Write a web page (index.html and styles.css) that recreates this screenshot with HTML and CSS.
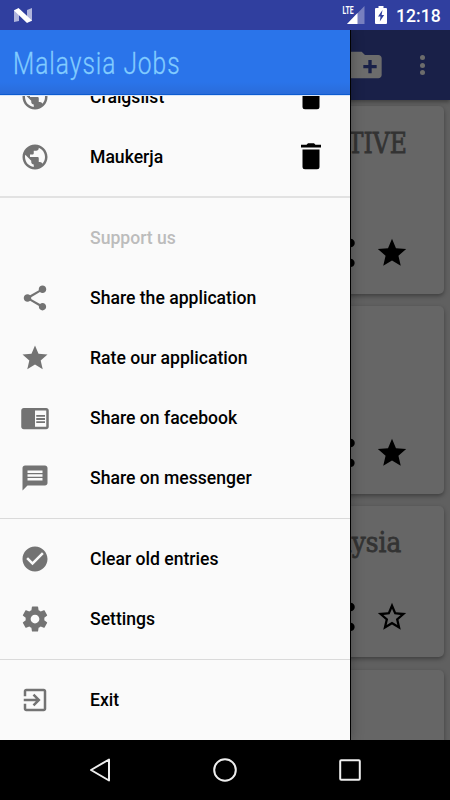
FILE: index.html
```html
<!DOCTYPE html>
<html lang="en">
<head>
<meta charset="utf-8">
<title>Malaysia Jobs</title>
<link rel="stylesheet" href="styles.css">
</head>
<body>
<svg width="0" height="0" class="defs">
  <symbol id="globe" viewBox="0 0 24 24"><path d="M12 2C6.480 2 2 6.480 2 12s4.480 10 10 10 10-4.480 10-10S17.520 2 12 2zm-1 17.930c-3.950-.490-7-3.850-7-7.930 0-.620.080-1.210.210-1.790L9 15v1c0 1.100.900 2 2 2v1.930zm6.900-2.540c-.260-.810-1-1.390-1.900-1.390h-1v-3c0-.550-.450-1-1-1H8v-2h2c.550 0 1-.450 1-1V7h2c1.100 0 2-.900 2-2v-.410c2.930 1.190 5 4.060 5 7.410 0 2.080-.800 3.970-2.100 5.390z"/></symbol>
  <symbol id="trash" viewBox="0 0 24 24"><path d="M5.200 6h13.600v13.700a2 2 0 0 1-2 2H7.200a2 2 0 0 1-2-2zM4 2.100h4.400l1.200-1.200h4.800l1.200 1.200H20v2.200H4z"/></symbol>
  <symbol id="share" viewBox="0 0 24 24"><path d="M18 16.080c-.760 0-1.440.300-1.960.770L8.910 12.700c.050-.230.090-.460.090-.700s-.040-.470-.090-.700l7.050-4.110c.540.500 1.250.810 2.040.810 1.660 0 3-1.340 3-3s-1.340-3-3-3-3 1.340-3 3c0 .240.040.470.090.700L8.040 9.810C7.500 9.310 6.790 9 6 9c-1.660 0-3 1.340-3 3s1.340 3 3 3c.790 0 1.500-.310 2.040-.810l7.120 4.160c-.050.210-.080.430-.080.650 0 1.610 1.310 2.920 2.920 2.920s2.920-1.310 2.920-2.920-1.310-2.920-2.920-2.920z"/></symbol>
  <symbol id="star" viewBox="0 0 24 24"><path d="M12 17.270L18.180 21l-1.640-7.030L22 9.240l-7.190-.61L12 2 9.190 8.630 2 9.240l5.460 4.730L5.820 21z"/></symbol>
  <symbol id="star-outline" viewBox="0 0 24 24"><path d="M22 9.240l-7.190-.62L12 2 9.190 8.630 2 9.240l5.460 4.730L5.820 21 12 17.270 18.180 21l-1.630-7.030L22 9.240zM12 15.400l-3.760 2.270 1-4.280-3.320-2.880 4.380-.380L12 6.100l1.710 4.040 4.380.380-3.320 2.880 1 4.280L12 15.400z"/></symbol>
  <symbol id="reader" viewBox="0 0 24 24"><path d="M13 12h7v1.500h-7zm0-2.500h7V11h-7zm0 5h7V16h-7zM21 4H3c-1.100 0-2 .900-2 2v13c0 1.100.900 2 2 2h18c1.100 0 2-.900 2-2V6c0-1.100-.900-2-2-2zm0 15h-9V6h9v13z"/></symbol>
  <symbol id="chat" viewBox="0 0 24 24"><path d="M20 2H4c-1.100 0-1.990.900-1.990 2L2 22l4-4h14c1.100 0 2-.900 2-2V4c0-1.100-.900-2-2-2zm-2 12H6v-2h12v2zm0-3H6V9h12v2zm0-3H6V6h12v2z"/></symbol>
  <symbol id="check" viewBox="0 0 24 24"><path d="M12 2C6.480 2 2 6.480 2 12s4.480 10 10 10 10-4.480 10-10S17.520 2 12 2zm-2 15l-5-5 1.410-1.410L10 14.170l7.590-7.590L19 8l-9 9z"/></symbol>
  <symbol id="gear" viewBox="0 0 24 24"><path d="M19.430 12.980c.040-.320.070-.640.070-.980s-.030-.660-.070-.980l2.110-1.650c.190-.150.240-.420.120-.640l-2-3.460c-.120-.220-.390-.300-.610-.220l-2.490 1c-.520-.400-1.080-.730-1.690-.980l-.380-2.650C14.460 2.180 14.250 2 14 2h-4c-.250 0-.460.180-.490.420l-.380 2.650c-.610.250-1.170.590-1.690.980l-2.490-1c-.230-.090-.490 0-.610.220l-2 3.460c-.130.220-.070.490.120.640l2.110 1.650c-.040.320-.070.650-.070.980s.030.660.070.980l-2.110 1.650c-.190.150-.240.420-.120.640l2 3.460c.120.220.390.300.610.220l2.490-1c.520.400 1.080.730 1.690.980l.380 2.650c.030.240.240.420.490.420h4c.250 0 .460-.180.490-.420l.380-2.650c.610-.250 1.170-.590 1.690-.980l2.490 1c.230.090.490 0 .610-.220l2-3.460c.120-.220.070-.490-.120-.640l-2.110-1.650zM12 15.500c-1.930 0-3.500-1.570-3.500-3.500s1.570-3.500 3.500-3.500 3.500 1.570 3.500 3.500-1.570 3.500-3.500 3.500z"/></symbol>
  <symbol id="exit" viewBox="0 0 24 24"><path d="M10.090 15.590L11.500 17l5-5-5-5-1.410 1.410L12.670 11H3v2h9.670l-2.580 2.590zM19 3H5c-1.110 0-2 .900-2 2v4h2V5h14v14H5v-4H3v4c0 1.100.890 2 2 2h14c1.100 0 2-.900 2-2V5c0-1.100-.900-2-2-2z"/></symbol>
  <symbol id="folder" viewBox="0 0 24 24"><path d="M20 6h-8l-2-2H4c-1.110 0-1.990.890-1.990 2L2 18c0 1.110.890 2 2 2h16c1.110 0 2-.890 2-2V8c0-1.110-.890-2-2-2zm-1 8h-3v3h-2v-3h-3v-2h3V9h2v3h3v2z"/></symbol>
</svg>

<div class="phone">
  <header class="status">
    <svg class="nougat" width="18" height="15" viewBox="0 0 18 15"><path d="M0 2l5-1v12l-5 1zM13 2l5-2v13l-5 1z" fill="#b0b5dc"/><path d="M0 2.500L4.500 0 18 12.500 13 15z" fill="#fff"/></svg>
    <div class="status-right">
      <svg width="24" height="20" viewBox="0 0 24 20"><path d="M22.500 1v18H5z" fill="#777fbf"/><path d="M15.500 8v11H5z" fill="#fff"/><path d="M0 0h12v9.500H0z" fill="#303f9f"/><text x="0.500" y="9" class="lte" textLength="11" lengthAdjust="spacingAndGlyphs">LTE</text></svg>
      <svg class="battery" width="12" height="18" viewBox="0 0 12 18"><path d="M3.500 0h5v2H11q1 0 1 1v14q0 1-1 1H1q-1 0-1-1V3q0-1 1-1h2.500z" fill="#fff"/><path d="M7.500 4L3 10.500h2.500L4.800 15.500 9.200 9H6.600z" fill="#303f9f"/></svg>
      <span class="clock">12:18</span>
    </div>
  </header>

  <main class="stage">
    <div class="toolbar">
      <svg class="folder"><use href="#folder"/></svg>
      <span class="more"><i></i><i></i><i></i></span>
    </div>
    <div class="feed">
      <article class="card tall">
        <h2 class="caps"><span>TIVE</span></h2>
        <div class="actions"><svg><use href="#share"/></svg><svg><use href="#star"/></svg></div>
      </article>
      <article class="card tall">
        <div class="actions"><svg><use href="#share"/></svg><svg><use href="#star"/></svg></div>
      </article>
      <article class="card short">
        <h2><span>Malaysia</span></h2>
        <div class="actions"><svg><use href="#share"/></svg><svg><use href="#star-outline"/></svg></div>
      </article>
      <article class="card tall"></article>
    </div>

    <aside class="drawer">
      <div class="brand"><span>Malaysia Jobs</span></div>
      <nav class="menu">
        <div class="scroll">
          <ul class="group first">
            <li><svg><use href="#globe"/></svg><span>Craigslist</span><svg class="delete"><use href="#trash"/></svg></li>
            <li><svg><use href="#globe"/></svg><span>Maukerja</span><svg class="delete"><use href="#trash"/></svg></li>
          </ul>
          <ul class="group support">
            <li class="heading"><span>Support us</span></li>
            <li><svg><use href="#share"/></svg><span>Share the application</span></li>
            <li><svg><use href="#star"/></svg><span>Rate our application</span></li>
            <li><svg><use href="#reader"/></svg><span>Share on facebook</span></li>
            <li><svg><use href="#chat"/></svg><span>Share on messenger</span></li>
          </ul>
          <ul class="group">
            <li><svg><use href="#check"/></svg><span>Clear old entries</span></li>
            <li><svg><use href="#gear"/></svg><span>Settings</span></li>
          </ul>
          <ul class="group">
            <li><svg><use href="#exit"/></svg><span>Exit</span></li>
          </ul>
        </div>
      </nav>
    </aside>
  </main>

  <footer class="navbar">
    <svg viewBox="0 0 24 24"><path d="M21 1.500v21L3 12z"/></svg>
    <svg viewBox="0 0 24 24"><circle cx="12" cy="12" r="10.800"/></svg>
    <svg viewBox="0 0 24 24"><rect x="2.200" y="2.200" width="19.600" height="19.600" rx="1"/></svg>
  </footer>
</div>
</body>
</html>
```

FILE: styles.css
```css
* { box-sizing: border-box; margin: 0; padding: 0; }
body { width: 450px; height: 800px; overflow: hidden; font-family: Roboto, sans-serif; background: #000; }
.defs { position: absolute; }
svg { display: block; flex: none; }
.phone { display: flex; flex-direction: column; height: 800px; }

.status { height: 30px; flex: none; background: #303f9f; display: flex; align-items: center; justify-content: space-between; padding: 0 9px 0 13.500px; }
.status-right { display: flex; align-items: center; }
.status-right > svg:first-child { margin-top: -1px; }
.lte { font: 700 10px Roboto, sans-serif; fill: #fff; }
.battery { margin-left: 9px; }
.clock { margin-left: 9px; font-size: 17.600px; font-weight: 500; line-height: 30px; color: #fff; padding-top: 1px; width: 45px; white-space: nowrap; }

.stage { position: relative; height: 710px; flex: none; overflow: hidden; background: #606060; }
.toolbar { position: relative; height: 70px; background: #192048; box-shadow: 0 2px 4px rgba(0,0,0,.35); display: flex; align-items: center; justify-content: flex-end; }
.folder { width: 40px; height: 40px; fill: #6c6c6c; margin-right: 35px; }
.more { display: flex; flex-direction: column; gap: 2.500px; width: 5px; margin-right: 25px; }
.more i { width: 5px; height: 5px; border-radius: 50%; background: #6c6c6c; }

.feed { display: flex; flex-direction: column; gap: 12px; padding: 6px 6px 0; }
.card { background: #666; border-radius: 5px; box-shadow: 0 2px 4px rgba(0,0,0,.35); display: flex; flex-direction: column; flex: none; }
.tall { height: 188px; }
.short { height: 151px; margin-bottom: 1px; }
.card h2 { font: 400 27px/34px "DejaVu Serif", serif; color: #333; -webkit-text-stroke: .8px #333; padding: 20px 43px 0 0; display: flex; justify-content: flex-end; }
.card h2 span { transform: scaleX(.92); transform-origin: right; }
.card .caps { padding-right: 37px; padding-top: 21px; }
.card .caps span { transform: scaleX(.87); }
.actions { margin-top: auto; display: flex; justify-content: flex-end; gap: 16px; padding: 0 35px 24px; }
.short .actions { padding-bottom: 23px; }
.actions svg { width: 34px; height: 34px; fill: #000; }

.drawer { position: absolute; inset: 0 auto 0 0; width: 351px; background: #fafafa; border-right: 1px solid #000; display: flex; flex-direction: column; box-shadow: 0 0 12px rgba(0,0,0,.3); }
.brand { position: relative; height: 65px; flex: none; background: linear-gradient(#2a74ea 80%, #2a6cda 98%, #0c5bd0 98%); display: flex; align-items: center; padding: 2px 0 0 13px; box-shadow: 0 1px 0 #d6e4fa; }
.brand span { font-size: 30.500px; font-weight: 300; color: #82ccff; -webkit-text-stroke: .3px #82ccff; white-space: nowrap; letter-spacing: 1.200px; transform: scaleX(.805); transform-origin: left; }
.menu { flex: 1; overflow: hidden; }
.scroll { margin-top: -28px; }
.group { list-style: none; border-top: 1px solid #dadada; padding: 10px 0; }
.group.first { border-top: 0; padding: 0 0 9px; }
.group.support { border-top: 2px solid #e2e2e2; }
.group li { height: 60px; display: flex; align-items: center; padding: 0 24px 0 20px; }
.group svg { width: 30px; height: 30px; fill: #737373; margin-right: 40px; }
.group span { font-size: 17.600px; font-weight: 500; color: #000; flex: 1; }
.group .delete { width: 30px; fill: #000; margin-right: 0; }
.group .heading { padding-left: 90px; }
.group .heading span { color: #bcbcbc; }

.navbar { height: 60px; background: #000; display: flex; align-items: center; justify-content: center; gap: 101px; }
.navbar svg { width: 24px; height: 24px; fill: none; stroke: #eee; stroke-width: 2; stroke-linejoin: round; }
```
